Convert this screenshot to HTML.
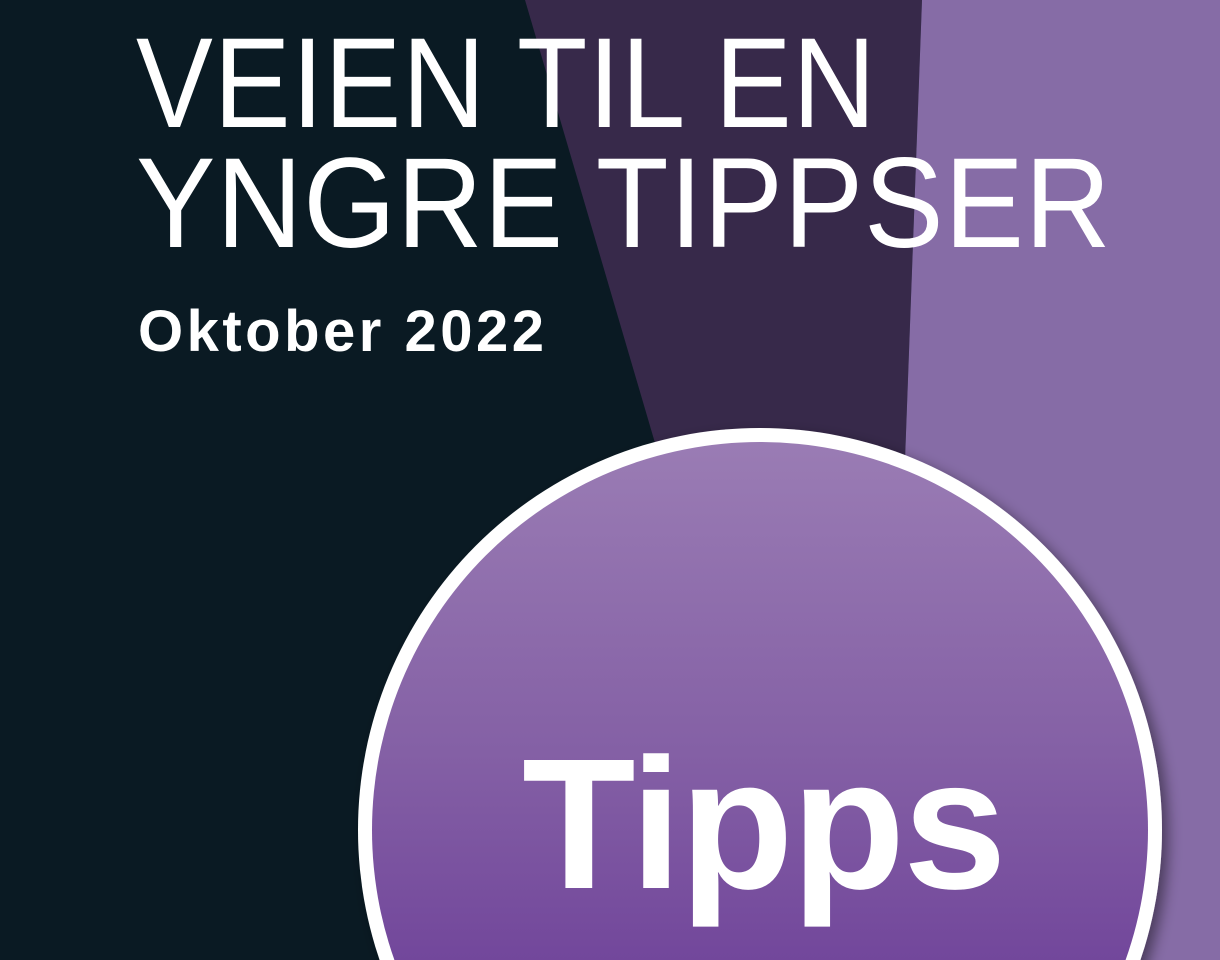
<!DOCTYPE html>
<html><head><meta charset="utf-8"><style>
html,body{margin:0;padding:0;width:1220px;height:960px;overflow:hidden}
body{position:relative;background:#0a1a23;font-family:"Liberation Sans",sans-serif}
.bg{position:absolute;left:0;top:0}
.t{position:absolute;color:#fff;white-space:nowrap}
.h{font-size:128px;left:136px;letter-spacing:1px;font-weight:400;line-height:1;transform-origin:0 0}
</style></head><body>
<svg class="bg" width="1220" height="960" viewBox="0 0 1220 960">
<defs>
<linearGradient id="g" x1="0" y1="442" x2="0" y2="1218" gradientUnits="userSpaceOnUse">
<stop offset="0" stop-color="#9a7cb4"/><stop offset="0.4" stop-color="#8460a5"/><stop offset="0.7" stop-color="#70449a"/>
</linearGradient>
<filter id="s" x="-10%" y="-10%" width="120%" height="120%"><feDropShadow dx="6" dy="6" stdDeviation="7" flood-color="#000" flood-opacity="0.45"/></filter>
</defs>
<rect width="1220" height="960" fill="#0a1a23"/>
<polygon points="525,0 922,0 905,460 660,460" fill="#37294a"/>
<polygon points="922,0 1220,0 1220,960 880,960 905,460" fill="#866ca6"/>
<circle cx="760" cy="830" r="402" fill="#fff" filter="url(#s)"/>
<circle cx="760" cy="830" r="388" fill="url(#g)"/>
</svg>
<div class="t h" style="top:20px;transform:scaleX(0.9)">VEIEN TIL EN</div>
<div class="t h" style="top:140px;transform:scaleX(0.93)">YNGRE TIPPSER</div>
<div class="t" style="left:138px;top:298px;font-size:58px;font-weight:700;letter-spacing:3.5px">Oktober 2022</div>
<div class="t" style="left:522px;top:732px;font-size:186px;font-weight:700;letter-spacing:-2px;line-height:1">Tipps</div>
</body></html>
